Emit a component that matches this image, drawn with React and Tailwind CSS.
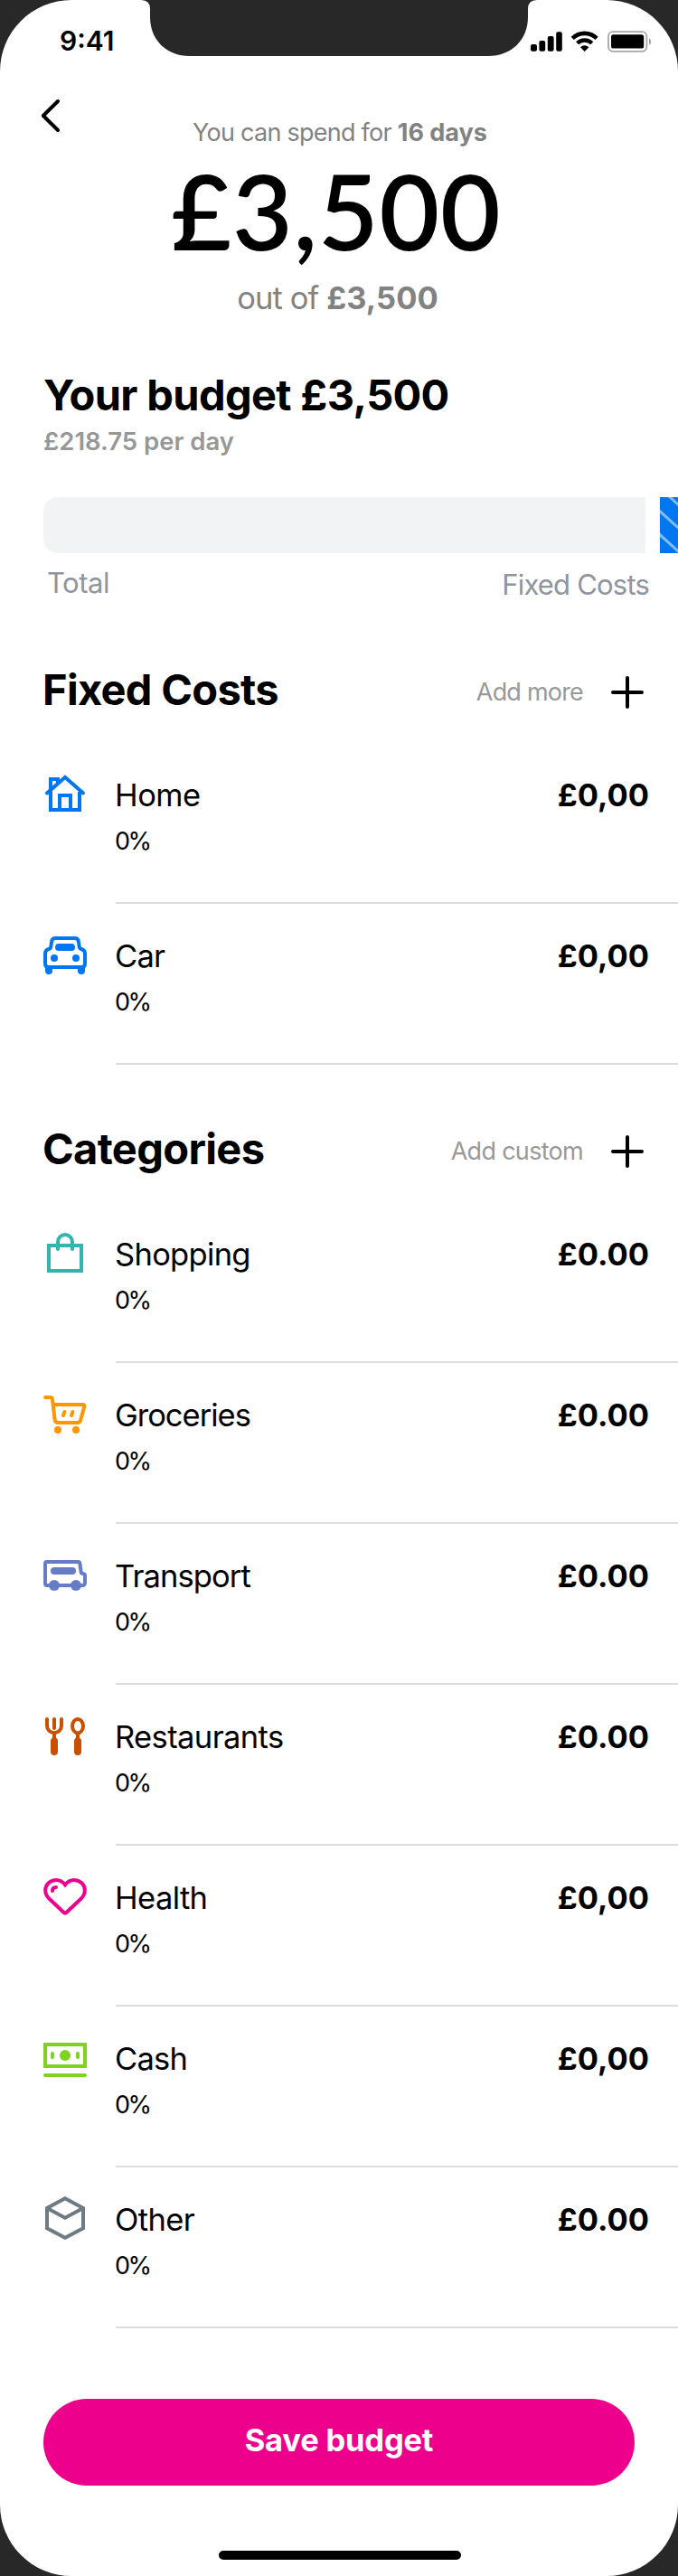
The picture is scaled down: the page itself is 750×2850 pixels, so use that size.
function HomeIcon() {
  return (
    <g fill="none" stroke="#0077f0" strokeWidth="4">
      <path d="M8 22V42H40V22" />
      <path d="M18 42V26H30V42" />
      <path d="M8 22V8H16V12" />
      <path d="M4 23.4L24 6L44 23.4" strokeLinecap="round" />
    </g>
  );
}

function CarIcon() {
  return (
    <g fill="#0077f0">
      <path
        d="M13.5 6H34.5Q38.6 6 39 10L39.7 15.5Q40 17.6 42 18Q46 19 46 23V34Q46 38 42.5 38H5.5Q2 38 2 34V23Q2 19 6 18Q8 17.6 8.3 15.5L9 10Q9.4 6 13.5 6Z"
        fill="none"
        stroke="#0077f0"
        strokeWidth="4"
      />
      <rect x="2" y="36" width="8" height="10" rx="4" />
      <rect x="38" y="36" width="8" height="10" rx="4" />
      <rect x="13" y="12" width="22" height="8" rx="4" />
      <circle cx="12" cy="28" r="4" />
      <circle cx="36" cy="28" r="4" />
    </g>
  );
}

function BagIcon() {
  return (
    <g fill="none" stroke="#33b5ad" strokeWidth="4">
      <rect x="6" y="16" width="36" height="28" />
      <path d="M16 20V12a8 8 0 0 1 16 0V20" strokeLinecap="round" />
    </g>
  );
}

function CartIcon() {
  return (
    <g fill="none" stroke="#ff9500" strokeWidth="4" strokeLinecap="round" strokeLinejoin="round">
      <path d="M2 6H7.5Q9.8 6 10 8.2L12.6 30.5Q13.1 34 16.5 34H37.5Q40.2 34 41.1 31.3L45.2 16.6Q45.8 14 43.3 14H11.5" />
      <path d="M23.4 22L22 26M32.4 22L31 26" />
      <circle cx="16" cy="42" r="4" fill="#ff9500" stroke="none" />
      <circle cx="36" cy="42" r="4" fill="#ff9500" stroke="none" />
    </g>
  );
}

function VanIcon() {
  return (
    <g fill="#647dc5">
      <path
        d="M4 10H38.5Q40.2 10 40.4 11.8L41.6 21.2Q41.9 22.9 43.6 23Q46 23.2 46 25.4V33Q46 36 43.2 36H4Q2 36 2 34V12Q2 10 4 10Z"
        fill="none"
        stroke="#647dc5"
        strokeWidth="4"
      />
      <rect x="8" y="16" width="28" height="8" rx="4" />
      <circle cx="12" cy="36" r="6" />
      <circle cx="36" cy="36" r="6" />
    </g>
  );
}

function CutleryIcon() {
  return (
    <g fill="#c95000">
      <g fill="none" stroke="#c95000" strokeWidth="4" strokeLinecap="round">
        <path d="M4 6V13.3a8 8 0 0 0 16 0V6" />
        <path d="M12 6V16" />
        <ellipse cx="38" cy="13.7" rx="6" ry="7.7" />
      </g>
      <path d="M10 22h4v4.5L16 29V42a4 4 0 0 1-8 0V29L10 26.5Z" />
      <path d="M36 22h4v4.5L42 29V42a4 4 0 0 1-8 0V29L36 26.5Z" />
    </g>
  );
}

function HeartIcon() {
  return (
    <g fill="none" stroke="#ec008c" strokeWidth="4">
      <path d="M24 11.4C21.4 8 18.2 6 14.4 6C7.4 6 2.2 11 2.2 17.4C2.2 21.4 3.9 24.3 7 27.2L22.4 41.8Q24 43.3 25.6 41.8L41 27.2C44.1 24.3 45.8 21.4 45.8 17.4C45.8 11 40.6 6 33.6 6C29.8 6 26.6 8 24 11.4Z" />
      <path d="M10 18Q10 14 14 14" strokeLinecap="round" />
    </g>
  );
}

function CashIcon() {
  return (
    <g fill="#7ed321">
      <rect x="2" y="10" width="44" height="24" fill="none" stroke="#7ed321" strokeWidth="4" />
      <circle cx="24" cy="22" r="6" />
      <rect x="8" y="18" width="4" height="8" rx="2" />
      <rect x="36" y="18" width="4" height="8" rx="2" />
      <rect x="0" y="42" width="48" height="4" rx="2" />
    </g>
  );
}

function BoxIcon() {
  return (
    <g fill="none" stroke="#6f7a82" strokeWidth="4">
      <path d="M24 2.2L44 12.9V35.3L24 45.8L4 35.3V12.9Z" />
      <path d="M4 12.9L24 23.8L44 12.9" />
    </g>
  );
}

const fixedCosts = [
  { name: "Home", amount: "£0,00", Icon: HomeIcon, tracking: "tracking-[-0.5px]" },
  { name: "Car", amount: "£0,00", Icon: CarIcon, tracking: "tracking-[-0.8px]" },
];

const categories = [
  { name: "Shopping", amount: "£0.00", Icon: BagIcon, tracking: "tracking-[-0.7px]" },
  { name: "Groceries", amount: "£0.00", Icon: CartIcon, tracking: "tracking-[-1px]" },
  { name: "Transport", amount: "£0.00", Icon: VanIcon, tracking: "tracking-[-0.9px]" },
  { name: "Restaurants", amount: "£0.00", Icon: CutleryIcon, tracking: "tracking-[-0.6px]" },
  { name: "Health", amount: "£0,00", Icon: HeartIcon, tracking: "tracking-[-0.6px]" },
  { name: "Cash", amount: "£0,00", Icon: CashIcon, tracking: "tracking-[-0.8px]" },
  { name: "Other", amount: "£0.00", Icon: BoxIcon, tracking: "tracking-[-0.6px]" },
];

function StatusBar() {
  return (
    <div className="flex h-[90px] items-start justify-between pl-[66px] pr-[29px]">
      <span className="pt-[27px] text-[30px] font-semibold leading-[36px]">9:41</span>
      <svg className="mt-[34px]" width="135" height="24" viewBox="586 34 135 24">
        <rect x="587" y="49" width="7" height="7.8" rx="2" />
        <rect x="596.4" y="45" width="6.8" height="11.8" rx="2" />
        <rect x="605.8" y="40" width="6.8" height="16.8" rx="2" />
        <rect x="615.2" y="35.2" width="6.6" height="21.6" rx="2" />
        <g fill="none" stroke="#000">
          <path d="M633.3 42.3a19.2 19.2 0 0 1 26.8 0" strokeWidth="4.6" />
          <path d="M638.6 47.8a11.6 11.6 0 0 1 16.2 0" strokeWidth="4.4" />
        </g>
        <path d="M646.7 56.9L642 52.2a6.7 6.7 0 0 1 9.4 0Z" />
        <rect x="673" y="35.2" width="42.4" height="21.6" rx="5" fill="none" stroke="#a6a6a6" strokeWidth="1.8" />
        <rect x="676" y="38.3" width="36.2" height="15.2" rx="2.6" />
        <path d="M718 42.2a4.4 4.4 0 0 1 0 7.6Z" fill="#a6a6a6" />
      </svg>
    </div>
  );
}

function SectionHeader({ title, action, titleClass, actionClass }) {
  return (
    <div className="flex h-14 items-start justify-between pl-[47px] pr-[38px]">
      <h2 className={`text-[47px] font-bold leading-[56px] ${titleClass}`}>{title}</h2>
      <div className="flex items-center gap-[31px] pt-[13px]">
        <span className={`text-[27px] leading-[36px] text-[#999] ${actionClass}`}>{action}</span>
        <svg width="36" height="36" viewBox="0 0 36 36" fill="none" stroke="#000" strokeWidth="4" strokeLinecap="round">
          <path d="M18 2V34M2 18H34" />
        </svg>
      </div>
    </div>
  );
}

function Row({ name, amount, Icon, tracking }) {
  return (
    <li className="flex h-[178px] gap-8 pl-12">
      <svg className="mt-8 shrink-0" width="48" height="48" viewBox="0 0 48 48">
        <Icon />
      </svg>
      <div className="flex flex-1 items-start justify-between border-b-2 border-[#dcdcdc] pr-8 pt-9">
        <div className="-ml-px">
          <div className={`text-[34.5px] leading-[44px] ${tracking}`}>{name}</div>
          <div className="mt-[11px] text-[27px] leading-[36px] tracking-[-2.6px]">0%</div>
        </div>
        <div className="text-[34.5px] font-bold leading-[44px]">{amount}</div>
      </div>
    </li>
  );
}

export default function App() {
  return (
    <div className="h-[2850px] w-[750px] bg-[#282828] font-['Inter',sans-serif] text-black">
      <div className="relative flex h-full flex-col overflow-hidden rounded-[79px] bg-white">
        <svg className="absolute left-0 top-0" width="750" height="62" viewBox="0 0 750 62" fill="#282828">
          <path d="M156 0Q166 0 166 10V19C166 44 184 62 210 62H540C566 62 584 44 584 19V10Q584 0 594 0Z" />
        </svg>
        <StatusBar />

        <header className="grid grid-cols-[128px_1fr_128px]">
          <button className="flex items-start pl-11 pt-[18px]">
            <svg width="24" height="40" viewBox="0 0 24 40" fill="none" stroke="#000" strokeWidth="4" strokeLinecap="round" strokeLinejoin="round">
              <path d="M20 4L3.8 20L20 36" />
            </svg>
          </button>
          <div className="flex flex-col items-center whitespace-nowrap pt-[39px] text-[#828282]">
            <p className="pl-[2px] text-[27px] leading-[36px] tracking-[-0.75px]">
              You can spend for <span className="font-bold tracking-[0px]">16 days</span>
            </p>
            <p className="mr-[6px] mt-[7px] font-['Lato',sans-serif] text-[115px] font-semibold leading-[120px] tracking-[0.9px] text-black">
              £3,500
            </p>
            <p className="mr-[3px] mt-4 text-[34.5px] leading-[44px] tracking-[-0.9px]">
              out of <span className="font-bold tracking-[0px]">£3,500</span>
            </p>
          </div>
        </header>

        <section className="mt-[57px]">
          <h1 className="pl-12 text-[47px] font-bold leading-[56px] tracking-[-0.65px]">Your budget £3,500</h1>
          <p className="mt-[5px] pl-12 text-[27.5px] font-semibold leading-[36px] text-[#979797]">£218.75 per day</p>
          <div className="mt-11 flex h-[62px] gap-4 pl-12">
            <div className="w-[666px] rounded-l-2xl bg-[#f2f3f5]" />
            <svg width="20" height="62" viewBox="0 0 20 62">
              <rect width="20" height="62" fill="#0077f0" />
              <path d="M-4 -14L24 12M-4 12L24 37.4M-4 38L24 63.4" stroke="#fff" strokeOpacity="0.5" strokeWidth="3" />
            </svg>
          </div>
          <div className="mt-[13px] flex justify-between pl-[52px] pr-8 text-[31px] leading-[40px] text-[#8e959e]">
            <span className="tracking-[-0.5px]">Total</span>
            <span className="pt-[2px] tracking-[-0.8px]">Fixed Costs</span>
          </div>
        </section>

        <section className="mt-[68px]">
          <SectionHeader title="Fixed Costs" action="Add more" titleClass="tracking-[-0.7px]" actionClass="tracking-[-0.8px]" />
          <ul className="mt-[31px]">
            {fixedCosts.map((item) => (
              <Row key={item.name} {...item} />
            ))}
          </ul>
        </section>

        <section className="mt-[65px]">
          <SectionHeader title="Categories" action="Add custom" titleClass="tracking-[-0.65px]" actionClass="tracking-[-0.7px]" />
          <ul className="mt-[31px]">
            {categories.map((item) => (
              <Row key={item.name} {...item} />
            ))}
          </ul>
        </section>

        <button className="ml-12 mt-[78px] flex h-24 w-[654px] shrink-0 items-center justify-center rounded-full bg-[#ec008c] pb-[5px] text-[34.5px] font-bold leading-[44px] tracking-[-0.2px] text-white">
          Save budget
        </button>
        <div className="ml-[242px] mt-[72px] h-[10px] w-[268px] shrink-0 rounded-full bg-black" />
      </div>
    </div>
  );
}
